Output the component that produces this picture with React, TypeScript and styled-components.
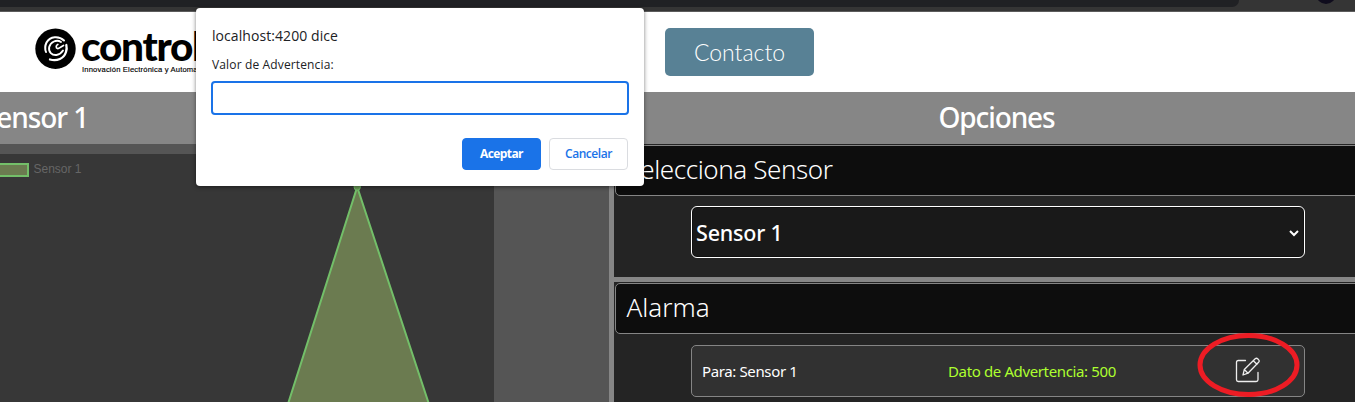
import React from "react";
import styled, { createGlobalStyle } from "styled-components";

const GlobalStyle = createGlobalStyle`
  * { box-sizing: border-box; }
  body { margin: 0; overflow: hidden; background: #242424; font-family: "Noto Sans", "Open Sans", sans-serif; }
`;

const Screen = styled.div`
  position: relative;
  width: 1355px;
  height: 402px;
  overflow: hidden;
  display: flex;
  flex-direction: column;
`;

const BrowserBar = styled.div`
  height: 12px;
  flex: none;
  display: flex;
  align-items: flex-start;
  justify-content: space-between;
  padding-right: 19px;
  background: #353535;
  border-bottom: 1px solid #5c5c5c;
  overflow: hidden;
`;
const AddressPill = styled.div`
  width: 1239px;
  height: 7px;
  background: #202124;
  border-radius: 0 0 12px 0;
`;
const Avatar = styled.div`
  width: 20px;
  height: 20px;
  margin-top: -16px;
  border-radius: 50%;
  background: #0f0c1d;
`;

const Header = styled.header`
  height: 80px;
  flex: none;
  display: flex;
  align-items: flex-start;
  justify-content: space-between;
  padding: 16px 541px 0 35px;
  background: #fff;
`;
const Brand = styled.div`
  display: flex;
  gap: 5px;
`;
const BrandText = styled.div`
  display: flex;
  flex-direction: column;
  color: #000;
`;
const BrandName = styled.span`
  height: 38px;
  font: 900 40.5px/35px Lato, sans-serif;
  letter-spacing: -1.3px;
`;
const BrandLine = styled.span`
  padding-left: 1px;
  font: 7.6px/8px "Liberation Sans", sans-serif;
  letter-spacing: 0.18px;
  white-space: nowrap;
  -webkit-text-stroke: 0.15px #000;
`;
const ContactButton = styled.button`
  width: 149px;
  height: 48px;
  padding: 0;
  border: 0;
  border-radius: 5px;
  background: #588195;
  color: #fff;
  font: 300 23px/48px Lato, sans-serif;
  letter-spacing: 0;
`;

const Main = styled.main`
  flex: 1;
  display: grid;
  grid-template-columns: 609px 741px;
  column-gap: 5px;
  background: #868686;
`;
const Column = styled.section`
  display: flex;
  flex-direction: column;
  min-width: 0;
`;
const ColumnTitle = styled.h2<{ $left?: boolean }>`
  height: 52px;
  flex: none;
  margin: 0;
  padding-left: ${(p) => (p.$left ? 0 : 24)}px;
  text-indent: ${(p) => (p.$left ? -18 : 0)}px;
  text-align: ${(p) => (p.$left ? "left" : "center")};
  color: #fff;
  font: 500 28px/51px "Noto Sans", sans-serif;
  letter-spacing: -1.1px;
`;
const ChartArea = styled.div`
  height: 258px;
  padding-top: 10px;
  background: #555;
`;
const Chart = styled.div`
  position: relative;
  width: 494px;
  height: 248px;
  background: #373737;
`;
const Plot = styled.svg`
  display: block;
`;
const Legend = styled.div`
  position: absolute;
  top: 8px;
  left: -11px;
  display: flex;
  align-items: center;
  gap: 4.5px;
  color: #666;
  font: 12px/13px "Liberation Sans", sans-serif;
`;
const Swatch = styled.span`
  width: 40px;
  height: 14px;
  margin-top: 1px;
  border: 2px solid #73bf69;
  background: #6b7b50;
`;

const Panel = styled.section<{ $height: number }>`
  height: ${(p) => p.$height}px;
  flex: none;
  padding: 1px 0 0 1px;
  margin-bottom: 5px;
  background: #242424;
  overflow: hidden;
`;
const PanelTitle = styled.h3<{ $spacing?: number }>`
  width: 760px;
  height: 51px;
  margin: 0;
  padding-left: 10.5px;
  border: 1px solid #858585;
  border-radius: 5px;
  background: #0d0d0d;
  color: #fff;
  font: 300 26px/46px "Noto Sans", sans-serif;
  letter-spacing: ${(p) => p.$spacing ?? 0}px;
`;
const Select = styled.div`
  display: flex;
  align-items: center;
  justify-content: space-between;
  width: 614px;
  height: 52px;
  margin: 10px 0 0 76px;
  padding: 2px 5px 0 4px;
  border: 1px solid #fff;
  border-radius: 6px;
  background: #191919;
  box-shadow: inset 0 0 0 1px #101010;
  color: #fff;
  font: 500 21.5px/46px "Noto Sans", sans-serif;
  letter-spacing: -0.2px;
`;
const AlarmCard = styled.div`
  display: grid;
  grid-template-columns: 246px 287px 30px;
  align-items: center;
  width: 614px;
  height: 52px;
  margin: 11px 0 0 76px;
  padding: 0 0 1px 10px;
  border: 1px solid #858585;
  border-radius: 5px;
  background: #313131;
  color: #fff;
  font: 400 15px/50px "Noto Sans", sans-serif;
  letter-spacing: -0.37px;
  white-space: nowrap;
`;
const Warning = styled.span`
  color: #adff2f;
`;
const Highlight = styled.svg`
  position: absolute;
  left: 1195px;
  top: 330px;
`;

const Dialog = styled.div`
  position: absolute;
  left: 196px;
  top: 8px;
  width: 448px;
  height: 178px;
  padding: 17px 16px 16px 15px;
  display: flex;
  flex-direction: column;
  border-radius: 4px;
  background: #fff;
  box-shadow: 0 1px 4px rgba(0, 0, 0, 0.5);
  color: #202124;
`;
const DialogOrigin = styled.div`
  padding-left: 1px;
  font: 400 14px/22px "Open Sans", sans-serif;
  letter-spacing: 0.07px;
`;
const DialogMessage = styled.label`
  margin-top: 9px;
  padding-left: 1px;
  font: 400 12px/18px "Open Sans", sans-serif;
  letter-spacing: 0.14px;
`;
const DialogInput = styled.input`
  width: 418px;
  height: 34px;
  flex: none;
  margin-top: 7px;
  padding: 0 8px;
  border: 2px solid #1a73e8;
  border-radius: 4px;
  background: #fff;
  outline: none;
`;
const DialogActions = styled.div`
  display: flex;
  justify-content: flex-end;
  gap: 8px;
  margin-top: 23px;
`;
const DialogButton = styled.button<{ $primary?: boolean }>`
  width: 79px;
  height: 32px;
  padding: 0;
  border: 1px solid ${(p) => (p.$primary ? "#1a73e8" : "#dadce0")};
  border-radius: 4px;
  background: ${(p) => (p.$primary ? "#1a73e8" : "#fff")};
  color: ${(p) => (p.$primary ? "#fff" : "#1a73e8")};
  font: ${(p) => (p.$primary ? 700 : 600)} 12px/30px "Open Sans", sans-serif;
  letter-spacing: ${(p) => (p.$primary ? -0.6 : -0.45)}px;
`;

const Logo = () => (
  <svg width="41" height="41" viewBox="0 0 41 41" fill="none">
    <circle cx="20.5" cy="20.7" r="20.2" fill="#000" />
    <g stroke="#fff" strokeLinecap="round">
      <path d="M29 12.5C24 7.5 15 8 11.5 14.5C9.8 18 10 21.5 11 24" strokeWidth="2" />
      <path d="M26 14C21.5 11 15.5 14 14.2 19C13.2 24 17 27.5 21.5 27C24.5 26.5 26.5 25 28 22.5" strokeWidth="1.9" />
      <path d="M15 31.5C22 33.5 29 30.5 31 24C32 21 31.8 19 31.3 17" strokeWidth="2.3" />
      <path d="M22.8 16.5C20.5 17.5 21 20 22.5 20.5C24 21 24.5 19.5 28.5 17.5" strokeWidth="1.7" />
    </g>
  </svg>
);

const EditIcon = () => (
  <svg width="26" height="28" viewBox="0 0 26 28" fill="none" stroke="#eee" strokeWidth="1.3" strokeLinejoin="round" strokeLinecap="round">
    <path d="M10.5 3.5H3.3Q1.5 3.5 1.5 5.3V22.7Q1.5 24.5 3.3 24.5H21.2Q23 24.5 23 22.7V15.5" />
    <path d="M8 18L9.3 12.5L20.2 1.8Q21.5.6 22.9 2L23.5 2.6Q24.9 4 23.6 5.3L13 16.2ZM9.3 12.5L13 16.2M18.3 3.7L22 7.3" />
  </svg>
);

export default function App() {
  return (
    <>
      <GlobalStyle />
      <Screen>
        <BrowserBar>
          <AddressPill />
          <Avatar />
        </BrowserBar>
        <Header>
          <Brand>
            <Logo />
            <BrandText>
              <BrandName>control</BrandName>
              <BrandLine>Innovación Electrónica y Automatización</BrandLine>
            </BrandText>
          </Brand>
          <ContactButton>Contacto</ContactButton>
        </Header>
        <Main>
          <Column>
            <ColumnTitle $left>Sensor 1</ColumnTitle>
            <ChartArea>
              <Chart>
                <Plot width="494" height="248" viewBox="0 0 494 248">
                  <path d="M285 259.3L357.2 33L432 259.3" fill="#6b7b50" stroke="#73bf69" strokeWidth="2" />
                  <circle cx="357.2" cy="33" r="3.2" fill="#6b9b58" stroke="#73bf69" />
                </Plot>
                <Legend>
                  <Swatch />
                  Sensor 1
                </Legend>
              </Chart>
            </ChartArea>
          </Column>
          <Column>
            <ColumnTitle>Opciones</ColumnTitle>
            <Panel $height={133}>
              <PanelTitle $spacing={-0.42}>Selecciona Sensor</PanelTitle>
              <Select>
                Sensor 1
                <svg width="10" height="7" viewBox="0 0 10 7" fill="none" stroke="#fff" strokeWidth="2">
                  <path d="M1 1L5 5L9 1" />
                </svg>
              </Select>
            </Panel>
            <Panel $height={120}>
              <PanelTitle>Alarma</PanelTitle>
              <AlarmCard>
                <span>Para: Sensor 1</span>
                <Warning>Dato de Advertencia: 500</Warning>
                <EditIcon />
              </AlarmCard>
            </Panel>
          </Column>
        </Main>
        <Highlight width="108" height="70" viewBox="0 0 108 70" fill="none">
          <ellipse cx="53.5" cy="35" rx="48.5" ry="29.5" stroke="#ed1c24" strokeWidth="5" />
        </Highlight>
        <Dialog>
          <DialogOrigin>localhost:4200 dice</DialogOrigin>
          <DialogMessage>Valor de Advertencia:</DialogMessage>
          <DialogInput />
          <DialogActions>
            <DialogButton $primary>Aceptar</DialogButton>
            <DialogButton>Cancelar</DialogButton>
          </DialogActions>
        </Dialog>
      </Screen>
    </>
  );
}
